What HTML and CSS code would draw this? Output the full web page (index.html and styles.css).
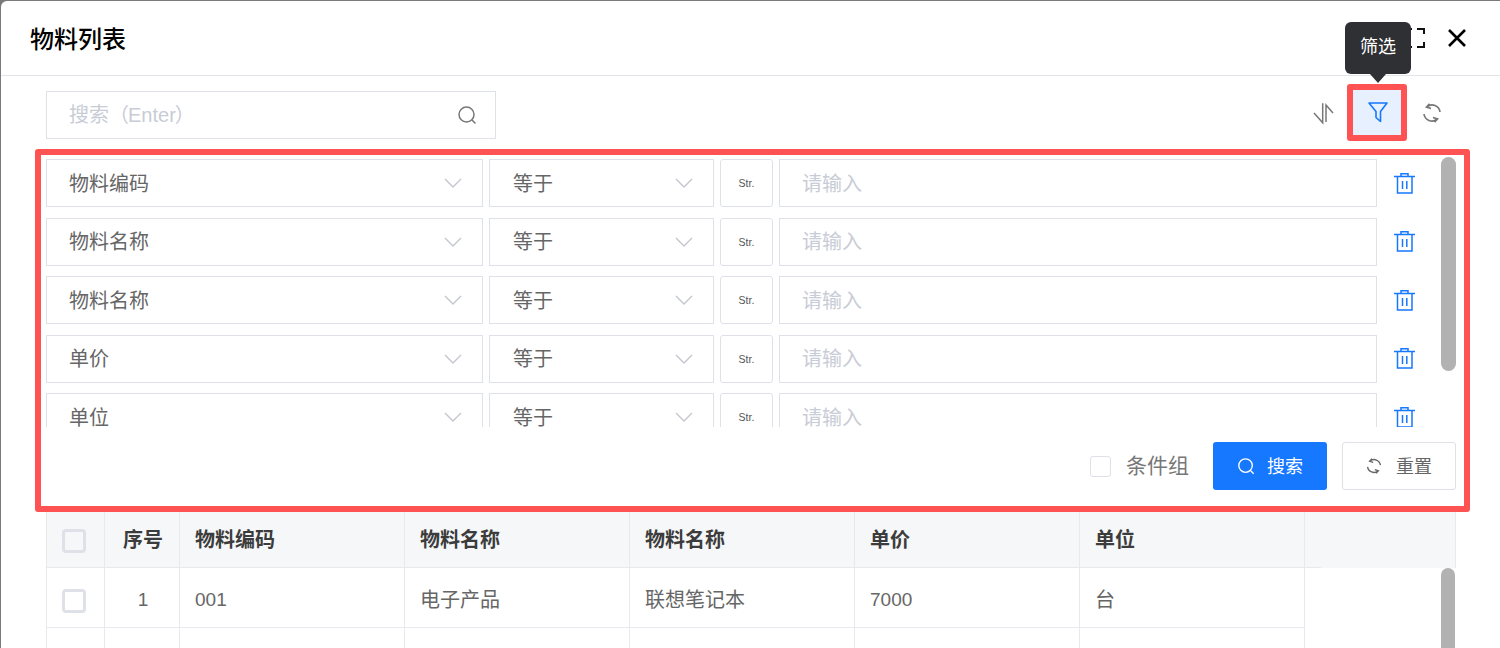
FILE: index.html
```html
<!DOCTYPE html>
<html lang="zh-CN">
<head>
<meta charset="utf-8">
<title>物料列表</title>
<link rel="stylesheet" href="styles.css">
</head>
<body>
<svg class="defs" width="0" height="0" aria-hidden="true">
  <defs>
    <symbol id="chev" viewBox="0 0 18 10"><path d="M1 1l8 8 8-8" fill="none" stroke="#c3c6ce" stroke-width="1.4"/></symbol>
    <symbol id="trash" viewBox="0 0 21 21"><path d="M0 3.500H21M7 3.500V0.800H14V3.500M3.500 3.500V20H18V3.500M8.500 8V16M12.800 8V16" fill="none" stroke="#1677ff" stroke-width="1.500"/></symbol>
    <symbol id="refresh" viewBox="0 0 20 20"><path d="M18 9A8 8 0 0 0 5 3.800M7.500 0.800L4.500 4L9 5.500M2 11A8 8 0 0 0 15 16.200M12.500 19.200L15.500 16L11 14.500" fill="none" stroke="currentColor" stroke-width="1.700"/></symbol>
    <symbol id="search" viewBox="0 0 20 20"><circle cx="9.500" cy="9.500" r="7.500" fill="none" stroke="currentColor" stroke-width="1.500"/><path d="M15 15l3.500 3.500" fill="none" stroke="currentColor" stroke-width="1.500"/></symbol>
  </defs>
</svg>
<div class="modal">
  <header class="modal-head">
    <h1 class="modal-title">物料列表</h1>
    <div class="win-actions">
      <svg class="ico-full" width="22" height="20" viewBox="0 0 22 20"><path d="M0 1H9M0 19H9M14 1h7v5M14 19h7v-5" fill="none" stroke="#111" stroke-width="2"/></svg>
      <svg class="ico-close" width="20" height="18" viewBox="0 0 20 18"><path d="M2 1l16 16M18 1L2 17" fill="none" stroke="#000" stroke-width="2.600"/></svg>
    </div>
  </header>

  <div class="toolbar">
    <div class="search-box">
      <span class="placeholder">搜索（<span class="latin">Enter</span>）</span>
      <svg class="ico-search" width="20" height="20"><use href="#search"/></svg>
    </div>
    <div class="tool-actions">
      <div class="tool-btn tool-btn-sort">
        <svg width="24" height="24" viewBox="0 0 24 24"><path d="M2 12l8.700 9.700V2.300M14 21V4l7 8" fill="none" stroke="#777" stroke-width="1.500"/></svg>
      </div>
      <div class="tool-btn tool-btn-active">
        <svg class="ico-filter" width="20" height="21" viewBox="0 0 20 21"><path d="M1 1h18l-6.500 8.500V19.500L8 15.500V9.500z" fill="none" stroke="#1677ff" stroke-width="1.600" stroke-linejoin="round"/></svg>
        <div class="tooltip">筛选</div>
      </div>
      <div class="tool-btn tool-btn-refresh">
        <svg width="20" height="20"><use href="#refresh"/></svg>
      </div>
    </div>
  </div>

  <section class="filter-panel">
    <div class="filter-rows">
      <div class="filter-row">
        <div class="field field-name"><span>物料编码</span><svg class="chev" width="18" height="10"><use href="#chev"/></svg></div>
        <div class="field field-op"><span>等于</span><svg class="chev" width="18" height="10"><use href="#chev"/></svg></div>
        <div class="field-type">Str.</div>
        <div class="field field-value"><span class="hint">请输入</span></div>
        <div class="trash"><svg width="21" height="21"><use href="#trash"/></svg></div>
      </div>
      <div class="filter-row">
        <div class="field field-name"><span>物料名称</span><svg class="chev" width="18" height="10"><use href="#chev"/></svg></div>
        <div class="field field-op"><span>等于</span><svg class="chev" width="18" height="10"><use href="#chev"/></svg></div>
        <div class="field-type">Str.</div>
        <div class="field field-value"><span class="hint">请输入</span></div>
        <div class="trash"><svg width="21" height="21"><use href="#trash"/></svg></div>
      </div>
      <div class="filter-row">
        <div class="field field-name"><span>物料名称</span><svg class="chev" width="18" height="10"><use href="#chev"/></svg></div>
        <div class="field field-op"><span>等于</span><svg class="chev" width="18" height="10"><use href="#chev"/></svg></div>
        <div class="field-type">Str.</div>
        <div class="field field-value"><span class="hint">请输入</span></div>
        <div class="trash"><svg width="21" height="21"><use href="#trash"/></svg></div>
      </div>
      <div class="filter-row">
        <div class="field field-name"><span>单价</span><svg class="chev" width="18" height="10"><use href="#chev"/></svg></div>
        <div class="field field-op"><span>等于</span><svg class="chev" width="18" height="10"><use href="#chev"/></svg></div>
        <div class="field-type">Str.</div>
        <div class="field field-value"><span class="hint">请输入</span></div>
        <div class="trash"><svg width="21" height="21"><use href="#trash"/></svg></div>
      </div>
      <div class="filter-row">
        <div class="field field-name"><span>单位</span><svg class="chev" width="18" height="10"><use href="#chev"/></svg></div>
        <div class="field field-op"><span>等于</span><svg class="chev" width="18" height="10"><use href="#chev"/></svg></div>
        <div class="field-type">Str.</div>
        <div class="field field-value"><span class="hint">请输入</span></div>
        <div class="trash"><svg width="21" height="21"><use href="#trash"/></svg></div>
      </div>
    </div>
    <div class="scrollbar scrollbar-panel"></div>
    <div class="filter-foot">
      <label class="group-check"><span class="box"></span><span class="group-label">条件组</span></label>
      <div class="btn btn-primary"><svg width="18" height="18"><use href="#search"/></svg><span>搜索</span></div>
      <div class="btn btn-default"><svg width="16" height="16"><use href="#refresh"/></svg><span>重置</span></div>
    </div>
  </section>

  <section class="table">
    <div class="t-row t-head">
      <div class="t-cell t-center t-first"><span class="t-check"></span></div>
      <div class="t-cell t-center t-seq">序号</div>
      <div class="t-cell">物料编码</div>
      <div class="t-cell">物料名称</div>
      <div class="t-cell">物料名称</div>
      <div class="t-cell">单价</div>
      <div class="t-cell">单位</div>
      <div class="t-cell t-last"></div>
    </div>
    <div class="t-row t-body">
      <div class="t-cell t-center t-first"><span class="t-check"></span></div>
      <div class="t-cell t-center t-seq t-num">1</div>
      <div class="t-cell t-num">001</div>
      <div class="t-cell">电子产品</div>
      <div class="t-cell">联想笔记本</div>
      <div class="t-cell t-num">7000</div>
      <div class="t-cell">台</div>
    </div>
    <div class="t-row t-body">
      <div class="t-cell"></div>
      <div class="t-cell"></div>
      <div class="t-cell"></div>
      <div class="t-cell"></div>
      <div class="t-cell"></div>
      <div class="t-cell"></div>
      <div class="t-cell"></div>
    </div>
    <div class="scrollbar scrollbar-table"></div>
  </section>
</div>
</body>
</html>
```
FILE: styles.css
```css
* { box-sizing: border-box; }
html, body { margin: 0; height: 648px; overflow: hidden; }
body {
  background: #7a7a7a;
  padding: 1px 0 0 1px;
  font-family: "Liberation Sans", "Noto Sans CJK SC", sans-serif;
  font-size: 20px;
  color: #666;
}
.defs { position: absolute; }
.modal {
  width: 1499px;
  height: 647px;
  background: #fff;
  border-top-left-radius: 6px;
  overflow: hidden;
}
.modal-head {
  height: 75px;
  border-bottom: 1px solid #e3e4ea;
  display: flex;
  align-items: center;
  justify-content: space-between;
  padding: 0 33px 0 29px;
}
.modal-title {
  margin: 0;
  font-size: 24px;
  font-weight: 500;
  color: #000;
  line-height: 34px;
  padding-top: 3px;
}
.win-actions { display: flex; align-items: center; gap: 22px; }
.toolbar {
  height: 73px;
  padding: 8px 44px 0 45px;
  display: flex;
  justify-content: space-between;
  align-items: flex-start;
}
.search-box {
  width: 450px;
  height: 48px;
  margin-top: 7px;
  border: 1px solid #dfe1e8;
  display: flex;
  align-items: center;
  justify-content: space-between;
  padding: 0 18px 0 22px;
  color: #777;
}
.placeholder { color: #c8ccd6; padding-bottom: 3px; }
.latin { margin: 0 -1px 0 -1px; }
.tool-actions { display: flex; }
.tool-btn {
  width: 48px;
  height: 57px;
  display: flex;
  align-items: center;
  justify-content: center;
  position: relative;
  color: #777;
}
.tool-btn-sort { padding-left: 2px; }
.tool-btn-active {
  width: 60px;
  border: 6px solid #ff5252;
  border-radius: 3px;
  background: #e6f0ff;
}
.ico-filter { margin-left: 1px; }
.tool-btn-refresh { margin-left: 1px; }
.tooltip {
  position: absolute;
  left: -8px;
  top: -68px;
  width: 66px;
  height: 52px;
  background: #2f3033;
  border-radius: 6px;
  color: #fff;
  font-size: 18px;
  text-align: center;
  line-height: 50px;
}
.tooltip::after {
  content: "";
  position: absolute;
  left: 25px;
  top: 52px;
  border: 8px solid transparent;
  border-bottom: 0;
  border-top: 9px solid #2f3033;
}
.filter-panel {
  width: 1435px;
  height: 363px;
  margin-left: 34px;
  border: 6px solid #ff5252;
  border-radius: 3px;
  position: relative;
  display: flex;
  flex-direction: column;
}
.filter-rows {
  height: 272px;
  padding: 4px 0 0 5px;
  overflow: hidden;
  display: flex;
  flex-direction: column;
  gap: 10.5px;
}
.filter-row { display: flex; gap: 6px; height: 48px; flex: none; }
.field {
  height: 48px;
  border: 1px solid #dfe1e8;
  background: #fff;
  display: flex;
  align-items: center;
  justify-content: space-between;
  padding: 0 20px 2px 22px;
  color: #666;
}
.field-name { width: 437px; }
.field-op { width: 225px; padding-left: 23px; }
.field-value { width: 598px; padding-left: 22px; }
.chev { margin-top: 2px; }
.hint { color: #c8ccd6; }
.field-type {
  width: 53px;
  height: 48px;
  border: 1px solid #dfe1e8;
  border-radius: 3px;
  display: flex;
  align-items: center;
  justify-content: center;
  font-size: 10.5px;
  color: #555;
}
.trash { width: 44px; display: flex; align-items: center; justify-content: center; padding-right: 1px; }
.scrollbar { position: absolute; background: #b2b2b2; border-radius: 8px; }
.scrollbar-panel { left: 1400px; top: 2px; width: 15px; height: 214px; }
.filter-foot {
  flex: 1;
  display: flex;
  align-items: flex-start;
  justify-content: flex-end;
  padding: 15px 8px 0 0;
}
.group-check { display: flex; align-items: center; height: 48px; color: #777; }
.box {
  width: 21px;
  height: 21px;
  border: 1px solid #dfe1e8;
  border-radius: 3px;
  margin-right: 15px;
}
.group-label { margin-right: 24px; font-size: 21px; padding-bottom: 4px; }
.btn {
  width: 114px;
  height: 48px;
  border-radius: 3px;
  display: flex;
  align-items: center;
  justify-content: center;
  gap: 12px;
  font-size: 18px;
}
.btn span { padding-bottom: 2px; }
.btn-primary { background: #1677ff; color: #fff; }
.btn-default { margin-left: 15px; border: 1px solid #dfe1e8; color: #666; gap: 14px; }
.table {
  width: 1410px;
  margin-left: 45px;
  position: relative;
  border-left: 1px solid #e8e9ee;
}
.t-row {
  display: grid;
  grid-template-columns: 58px 75px 225px 225px 225px 225px 225px 151px;
}
.t-head {
  height: 56px;
  background: #f6f7f9;
  color: #3c3c3c;
  font-weight: 700;
}
.t-head::after {
  content: "";
  position: absolute;
  left: 0;
  top: 55px;
  width: 1274px;
  height: 1px;
  background: #e8e9ee;
}
.t-body { height: 60px; color: #666; }
.t-cell {
  display: flex;
  align-items: center;
  padding: 1px 0 0 15px;
  border-right: 1px solid #e8e9ee;
  border-bottom: 1px solid #e8e9ee;
}
.t-head .t-cell { border-bottom: 0; padding-top: 0; padding-bottom: 3px; }
.t-center { justify-content: center; padding-left: 0; }
.t-first { padding-right: 4px; }
.t-seq { padding-left: 2px; }
.t-num { padding-top: 5px; font-size: 19px; }
.t-check {
  width: 24px;
  height: 24px;
  border: 3px solid #dfe1e8;
  border-radius: 4px;
  background: #fff;
}
.t-head .t-check { background: #f6f7f9; margin-top: 5px; }
.t-body .t-check { margin-top: 6px; }
.scrollbar-table { left: 1394px; top: 56px; width: 14px; height: 200px; }
```
